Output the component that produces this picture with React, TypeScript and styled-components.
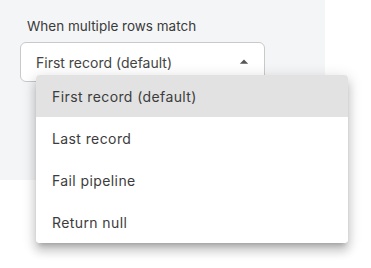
import styled, { createGlobalStyle } from "styled-components";

const GlobalStyle = createGlobalStyle`
  html, body {
    margin: 0;
    padding: 0;
    background: #ffffff;
    font-family: Inter, "Noto Sans", sans-serif;
  }
`;

const Page = styled.div`
  width: 371px;
  height: 268px;
  overflow: hidden;
`;

const Panel = styled.div`
  width: 325px;
  height: 180px;
  background: #f4f5f7;
  box-sizing: border-box;
  padding: 16px 0 0 20px;
`;

const Label = styled.div`
  font-size: 13.5px;
  color: #3a3a3a;
  padding-left: 7px;
  line-height: 20px;
  margin-bottom: 6px;
`;

const Field = styled.div`
  position: relative;
  width: 245px;
`;

const SelectBox = styled.div`
  height: 40px;
  box-sizing: border-box;
  background: #fff;
  border: 1px solid #c9c9c9;
  border-radius: 6px;
  display: flex;
  align-items: center;
  justify-content: space-between;
  padding: 0 10px 0 15px;
  font-size: 14px;
  color: #444;
`;

const Menu = styled.ul`
  position: absolute;
  top: 33px;
  left: 16px;
  width: 312px;
  margin: 0;
  padding: 0;
  list-style: none;
  background: #fff;
  border-radius: 4px;
  overflow: hidden;
  box-shadow: 0 5px 5px -3px rgba(0, 0, 0, 0.2), 0 8px 10px 1px rgba(0, 0, 0, 0.14),
    0 3px 14px 2px rgba(0, 0, 0, 0.12);
`;

const Item = styled.li<{ $selected?: boolean }>`
  height: 42px;
  display: flex;
  align-items: center;
  padding-left: 16px;
  font-size: 14px;
  letter-spacing: 0.4px;
  color: #3c3c3c;
  background: ${p => (p.$selected ? "#e2e2e2" : "#fff")};
`;

const options = ["First record (default)", "Last record", "Fail pipeline", "Return null"];

function App() {
  return (
    <Page>
      <GlobalStyle />
      <Panel>
        <Label>When multiple rows match</Label>
        <Field>
          <SelectBox>
            <span>First record (default)</span>
            <svg width="20" height="20" viewBox="0 0 24 24">
              <path d="M7 14l5-5 5 5z" fill="#555" />
            </svg>
          </SelectBox>
          <Menu>
            {options.map((o, i) => (
              <Item key={o} $selected={i === 0}>
                {o}
              </Item>
            ))}
          </Menu>
        </Field>
      </Panel>
    </Page>
  );
}

export default App;
